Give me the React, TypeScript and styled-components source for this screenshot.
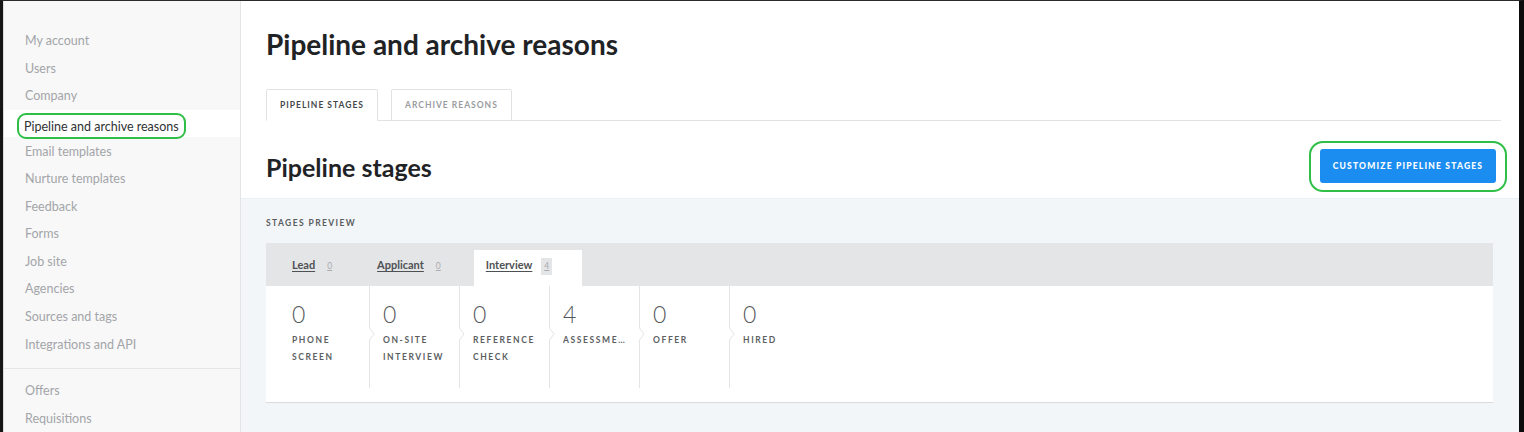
import React, { FC } from 'react';
import styled, { createGlobalStyle } from 'styled-components';

const GlobalStyle = createGlobalStyle`
  html, body {
    margin: 0;
    padding: 0;
    background: #ffffff;
  }
  body {
    font-family: Lato, 'Open Sans', 'Noto Sans', sans-serif;
    -webkit-font-smoothing: antialiased;
  }
  * {
    box-sizing: border-box;
  }
`;

const colors = {
  ink: '#1f2326',
  text: '#4a4d50',
  muted: '#a3a5a8',
  line: '#e1e2e4',
  sidebar: '#f8f8f8',
  section: '#f3f6f9',
  bar: '#e4e5e7',
  blue: '#1b8df1',
  annotate: '#2fbf47',
};

const Frame = styled.div`
  display: flex;
  width: 1524px;
  height: 432px;
  overflow: hidden;
  border-top: 1px solid #2a2a2a;
  border-left: 3px solid #161616;
  border-right: 5px solid #0c0c0c;
`;

const Sidebar = styled.nav`
  flex: 0 0 238px;
  display: flex;
  flex-direction: column;
  padding-top: 26px;
  background: ${colors.sidebar};
  border-left: 1px solid #dcdcdc;
  border-right: 1px solid #e4e4e4;
`;

const NavItem = styled.a<{ $active?: boolean }>`
  display: flex;
  align-items: center;
  height: 27.7px;
  padding-left: 21px;
  font-size: 12.5px;
  color: ${({ $active }) => ($active ? '#2f3235' : colors.muted)};
  background: ${({ $active }) => ($active ? '#ffffff' : 'transparent')};
  text-decoration: none;
  white-space: nowrap;
`;

const Annotation = styled.span`
  display: inline-flex;
  align-items: center;
  height: 26px;
  margin: 5px 0 0 -8px;
  padding: 0 5px;
  border: 2px solid ${colors.annotate};
  border-radius: 9px;
`;

const NavDivider = styled.hr`
  width: 100%;
  margin: 10px 0 8px;
  border: none;
  border-top: 1px solid #e6e6e6;
`;

const Main = styled.main`
  flex: 1;
  display: flex;
  flex-direction: column;
  min-width: 0;
`;

const Header = styled.header`
  padding: 26px 18px 0 25px;
`;

const Title = styled.h1`
  margin: 0;
  font-size: 28px;
  line-height: 34px;
  font-weight: 700;
  color: ${colors.ink};
`;

const TabList = styled.div`
  display: flex;
  gap: 13px;
  margin-top: 28px;
  border-bottom: 1px solid ${colors.line};
`;

const Tab = styled.button<{ $active?: boolean }>`
  height: 32px;
  margin-bottom: -1px;
  padding: 0 13px;
  font-family: inherit;
  font-size: 8.5px;
  font-weight: 700;
  letter-spacing: 1px;
  text-transform: uppercase;
  color: ${({ $active }) => ($active ? '#45484b' : '#9a9c9f')};
  background: #ffffff;
  border: 1px solid ${colors.line};
  border-bottom-color: ${({ $active }) => ($active ? '#ffffff' : colors.line)};
  border-radius: 2px 2px 0 0;
`;

const SectionHead = styled.div`
  display: flex;
  align-items: center;
  justify-content: space-between;
  margin-top: 20px;
  margin-right: -6px;
`;

const SectionTitle = styled.h2`
  margin: 0;
  font-size: 25px;
  font-weight: 700;
  color: ${colors.ink};
`;

const ButtonRing = styled.span`
  display: inline-flex;
  padding: 6px 9px 7px;
  border: 2px solid ${colors.annotate};
  border-radius: 14px;
`;

const PrimaryButton = styled.button`
  width: 176px;
  height: 34px;
  padding: 0;
  font-family: inherit;
  font-size: 8.5px;
  font-weight: 900;
  letter-spacing: 1.2px;
  text-transform: uppercase;
  color: #ffffff;
  background: ${colors.blue};
  border: none;
  border-radius: 3px;
`;

const Preview = styled.section`
  flex: 1;
  margin-top: 6px;
  padding: 18px 26px 0 25px;
  background: ${colors.section};
  border-top: 1px solid #eceff2;
`;

const PreviewLabel = styled.div`
  font-size: 8.5px;
  line-height: 12px;
  font-weight: 700;
  letter-spacing: 1.4px;
  text-transform: uppercase;
  color: #5a5d60;
`;

const StageBar = styled.div`
  display: flex;
  align-items: flex-end;
  height: 43px;
  margin-top: 14px;
  padding-left: 14px;
  background: ${colors.bar};
`;

const StageTab = styled.div<{ $active?: boolean }>`
  display: flex;
  align-items: baseline;
  height: 36px;
  padding: 8px 30px 0 12px;
  background: ${({ $active }) => ($active ? '#ffffff' : 'transparent')};
`;

const StageName = styled.span`
  font-size: 11px;
  font-weight: 700;
  color: #4e5154;
  text-decoration: underline;
  text-underline-offset: 2px;
`;

const StageCount = styled.span`
  margin-left: 9px;
  padding: 3px 3px 4px;
  font-size: 8.5px;
  color: #a9abae;
  text-decoration: underline;
  background: ${colors.bar};
`;

const StepRow = styled.div`
  display: flex;
  height: 117px;
  padding-left: 26px;
  background: #ffffff;
  border-bottom: 1px solid #dadbdd;
`;

const Step = styled.div`
  width: 84px;
  padding: 14px 8px 0 8px;
  &:first-child {
    width: 77px;
    padding-left: 0;
  }
`;

const StepValue = styled.div`
  font-size: 23px;
  line-height: 28px;
  font-weight: 300;
  color: #55585b;
`;

const StepLabel = styled.div`
  margin-top: 4px;
  font-size: 8.5px;
  line-height: 17px;
  font-weight: 700;
  letter-spacing: 1.6px;
  text-transform: uppercase;
  color: #5c5f62;
  overflow: hidden;
  text-overflow: ellipsis;
`;

const Chevron: FC = () => (
  <svg width="6" height="102" viewBox="0 0 6 102" style={{ flex: '0 0 6px' }}>
    <path
      d="M0.5 0 V42 L5 48 L0.5 54 V102"
      fill="none"
      stroke="#e3e4e6"
      strokeWidth="1"
    />
  </svg>
);

const navTop = [
  'My account',
  'Users',
  'Company',
  'Pipeline and archive reasons',
  'Email templates',
  'Nurture templates',
  'Feedback',
  'Forms',
  'Job site',
  'Agencies',
  'Sources and tags',
  'Integrations and API',
];
const navBottom = ['Offers', 'Requisitions'];

const stageTabs = [
  { name: 'Lead', count: 0 },
  { name: 'Applicant', count: 0 },
  { name: 'Interview', count: 4, active: true },
];

const steps = [
  { value: 0, label: 'Phone screen' },
  { value: 0, label: 'On-site interview' },
  { value: 0, label: 'Reference check' },
  { value: 4, label: 'Assessment' },
  { value: 0, label: 'Offer' },
  { value: 0, label: 'Hired' },
];

const App: FC = () => {
  const active = 'Pipeline and archive reasons';
  return (
    <>
      <GlobalStyle />
      <Frame>
        <Sidebar>
          {navTop.map((item) =>
            item === active ? (
              <NavItem key={item} $active>
                <Annotation>{item}</Annotation>
              </NavItem>
            ) : (
              <NavItem key={item}>{item}</NavItem>
            )
          )}
          <NavDivider />
          {navBottom.map((item) => (
            <NavItem key={item}>{item}</NavItem>
          ))}
        </Sidebar>
        <Main>
          <Header>
            <Title>Pipeline and archive reasons</Title>
            <TabList>
              <Tab $active>Pipeline stages</Tab>
              <Tab>Archive reasons</Tab>
            </TabList>
            <SectionHead>
              <SectionTitle>Pipeline stages</SectionTitle>
              <ButtonRing>
                <PrimaryButton>Customize pipeline stages</PrimaryButton>
              </ButtonRing>
            </SectionHead>
          </Header>
          <Preview>
            <PreviewLabel>Stages preview</PreviewLabel>
            <StageBar>
              {stageTabs.map((tab) => (
                <StageTab key={tab.name} $active={tab.active}>
                  <StageName>{tab.name}</StageName>
                  <StageCount>{tab.count}</StageCount>
                </StageTab>
              ))}
            </StageBar>
            <StepRow>
              {steps.map((step, i) => (
                <React.Fragment key={step.label}>
                  {i > 0 && <Chevron />}
                  <Step>
                    <StepValue>{step.value}</StepValue>
                    <StepLabel>{step.label}</StepLabel>
                  </Step>
                </React.Fragment>
              ))}
            </StepRow>
          </Preview>
        </Main>
      </Frame>
    </>
  );
};

export default App;
